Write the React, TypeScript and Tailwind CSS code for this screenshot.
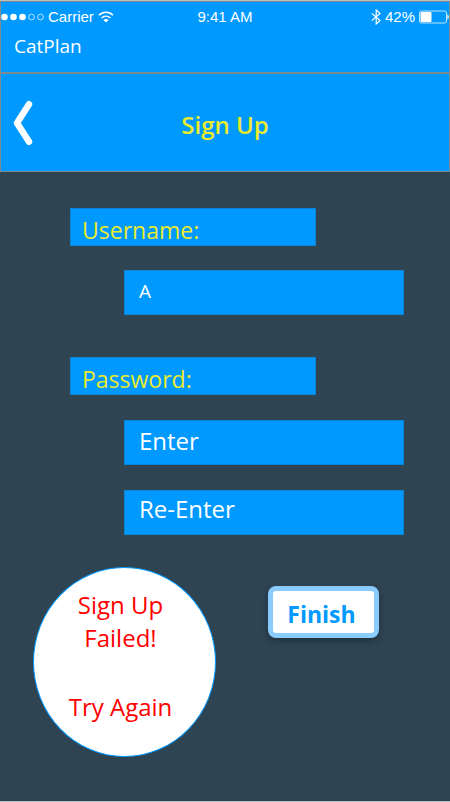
import { useState } from "react";

function SignalDots() {
  return (
    <svg className="h-3 w-[43px]" viewBox="0 0 43 12" fill="#fff" aria-hidden="true">
      <circle cx="3.5" cy="6" r="3.3" />
      <circle cx="12.5" cy="6" r="3.3" />
      <circle cx="21.5" cy="6" r="3.3" />
      <circle cx="30.5" cy="6" r="2.9" fill="none" stroke="#fff" strokeWidth="0.7" />
      <circle cx="39.5" cy="6" r="2.9" fill="none" stroke="#fff" strokeWidth="0.7" />
    </svg>
  );
}

function WifiIcon() {
  return (
    <svg className="h-3 w-4" viewBox="0 0 16 12" fill="none" stroke="#fff" strokeWidth="1.6" aria-hidden="true">
      <path d="M1 4.2C5 0.2 11 0.2 15 4.2" />
      <path d="M3.5 7C6.1 4.6 9.9 4.6 12.5 7" />
      <path d="M5.4 9C7 7.6 9 7.6 10.6 9L8 11.6Z" fill="#fff" stroke="none" />
    </svg>
  );
}

function BluetoothIcon() {
  return (
    <svg className="h-4 w-[10px]" viewBox="0 0 10 16" fill="none" stroke="#fff" strokeWidth="1.2" aria-hidden="true">
      <path d="M0.8 4.4L9 11.5L5.2 15V1L9 4.5L0.8 11.6" />
    </svg>
  );
}

function BatteryIcon() {
  return (
    <svg className="h-[14px] w-[30px]" viewBox="0 0 30 14" aria-hidden="true">
      <rect x="0.5" y="1" width="27" height="12" rx="2" fill="none" stroke="#fff" strokeOpacity="0.75" />
      <rect x="1.5" y="2" width="11" height="10" rx="1" fill="#fff" />
      <path d="M28.4 4.6C30.2 5.2 30.2 8.8 28.4 9.4Z" fill="#fff" />
    </svg>
  );
}

const labelBox =
  "mr-[88px] block h-[38px] border border-[#0b84d8] bg-[#0099ff] px-[11px] pt-1 text-[23px] leading-[34px] text-[#ebeb2d]";

const fieldBox =
  "ml-[54px] block h-[45px] w-[calc(100%-54px)] border border-[#0b84d8] bg-[#0099ff] px-[14px] text-white placeholder:text-white placeholder:opacity-100 outline-none";

export default function App() {
  const [username, setUsername] = useState("A");

  return (
    <div className="flex min-h-screen flex-col border-y border-[#b9c0c2] bg-[#2e4453] font-['Open_Sans','Noto_Sans',sans-serif]">
      <header className="h-[72px] border border-[#7c8a92] bg-[#0099ff] text-white">
        <div className="grid h-[30px] grid-cols-[1fr_auto_1fr] items-center font-['Liberation_Sans',Arial,sans-serif] text-[15px] leading-5">
          <div className="flex items-center gap-1">
            <SignalDots />
            <span>Carrier</span>
            <WifiIcon />
          </div>
          <span>9:41 AM</span>
          <div className="flex items-center justify-end gap-1">
            <BluetoothIcon />
            <span>42%</span>
            <BatteryIcon />
          </div>
        </div>
        <p className="px-[13px] text-[19px] leading-7">CatPlan</p>
      </header>

      <div className="grid h-[99px] grid-cols-[1fr_auto_1fr] items-center border border-[#7c8a92] bg-[#0099ff]">
        <button type="button" aria-label="Back" className="w-fit pl-3">
          <svg className="h-[46px] w-5" viewBox="0 0 20 46" fill="none" stroke="#fff" strokeWidth="6.5" strokeLinecap="round" strokeLinejoin="round">
            <path d="M16 4.2L4 23L16 41.8" />
          </svg>
        </button>
        <h1 className="pt-1 text-2xl font-semibold text-[#ebeb2d]">Sign Up</h1>
      </div>

      <form className="pl-[70px] pr-[46px] pt-9" onSubmit={(e) => e.preventDefault()}>
        <label htmlFor="username" className={labelBox}>
          Username:
        </label>
        <input
          id="username"
          type="text"
          value={username}
          onChange={(e) => setUsername(e.target.value)}
          className={`${fieldBox} mt-6 pb-1 text-[19px]`}
        />
        <label htmlFor="password" className={`${labelBox} mt-[42px]`}>
          Password:
        </label>
        <input id="password" type="password" placeholder="Enter" className={`${fieldBox} mt-[25px] pb-1 text-2xl`} />
        <input
          type="password"
          aria-label="Re-enter password"
          placeholder="Re-Enter"
          className={`${fieldBox} mt-[25px] pb-2 text-2xl`}
        />

        <div className="-ml-[37px] mt-8 flex items-start gap-[52px]">
          <div role="alert" className="flex h-[190px] w-[183px] shrink-0 flex-col items-center gap-9 rounded-[50%] border border-[#0099ff] bg-white pr-2 pt-5 text-center text-2xl leading-[33px] text-[#ff0000]">
            <p>
              Sign Up
              <br />
              Failed!
            </p>
            <p>Try Again</p>
          </div>
          <button
            type="submit"
            className="mt-[19px] h-[52px] w-[111px] rounded-lg border-[5px] border-[#8accff] bg-white pr-1 pt-1 text-[23px] font-bold text-[#0099ff] shadow-[0_3px_6px_rgba(0,0,0,0.3)]"
          >
            Finish
          </button>
        </div>
      </form>
    </div>
  );
}
